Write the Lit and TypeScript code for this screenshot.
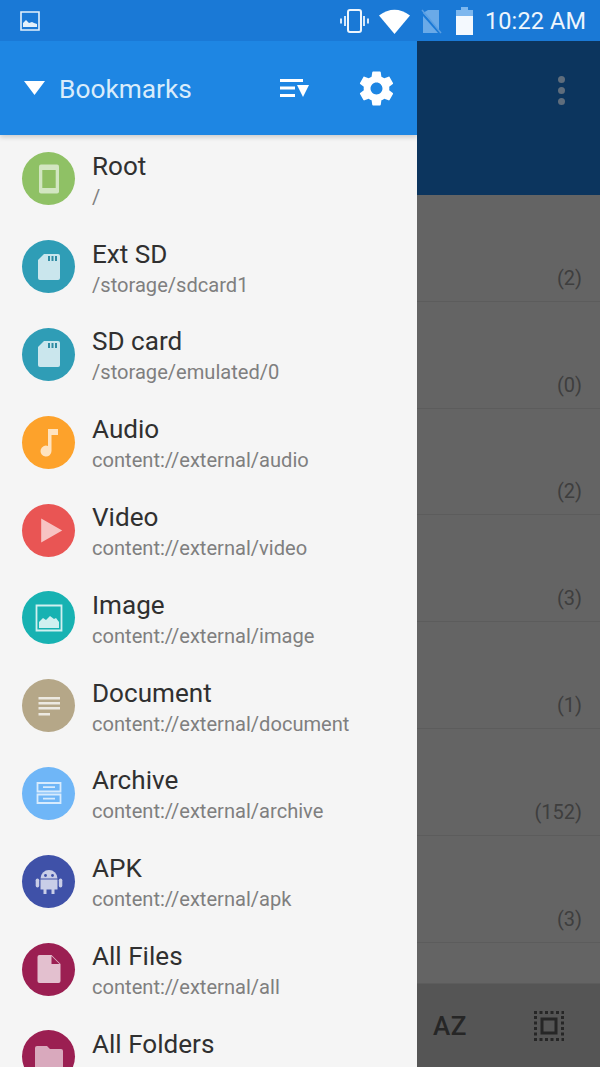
import { LitElement, html, css, svg } from "lit";
import { customElement } from "lit/decorators.js";

const sd = svg`<path d="M13 5h14a2 2 0 0 1 2 2v22a2 2 0 0 1-2 2H9a2 2 0 0 1-2-2V11z" fill="#fff" fill-opacity=".75"/><path d="M17 7h2v5h-2zM20.500 7h2v5h-2zM24 7h2v5h-2z" fill="#2f8ba3"/>`;
const icons: Record<string, unknown> = {
  root: svg`<rect x="8" y="3.500" width="20" height="29" rx="2" fill="#fff" fill-opacity=".6"/><rect x="11.300" y="9" width="13.400" height="18" fill="#8fbf62"/>`,
  sd,
  audio: svg`<path d="M17 5h10v6h-6.500v16a5.500 5.500 0 1 1-3.500-5.100z" fill="#fff" fill-opacity=".7"/>`,
  video: svg`<path d="M10.200 6.500 31.200 18.500 10.200 30.500z" fill="#fff" fill-opacity=".65"/>`,
  image: svg`<path d="M5.500 5.500h25v25h-25z" fill="none" stroke="#fff" stroke-opacity=".8" stroke-width="1.800"/><path d="M8 28v-6l4-4 3 2 4-4 4 3 2-1 3 4v6z" fill="#fff" fill-opacity=".8"/>`,
  doc: svg`<path d="M7.500 9h21.500v2.500H7.500zM7.500 14h21.500v2.500H7.500zM7.500 19h21.500v2.500H7.500zM7.500 25h11.500v2.500H7.500z" fill="#fff" fill-opacity=".75"/>`,
  archive: svg`<g fill="none" stroke="#fff" stroke-opacity=".72" stroke-width="1.800"><path d="M6.500 8h23v8.500h-23zM6.500 19.500h23v8.500h-23z"/><path d="M12 12.200h12M12 23.700h12"/></g>`,
  apk: svg`<g fill="#fff" fill-opacity=".72"><path d="M9.500 15.500a8.500 8.500 0 0 1 17 0z"/><path d="M9.500 16.500h17v10h-3v4.500h-3v-4.500h-5v4.500h-3v-4.500h-3z"/><rect x="4.700" y="15.500" width="3.500" height="9" rx="1.700"/><rect x="27.800" y="15.500" width="3.500" height="9" rx="1.700"/></g><circle cx="14.500" cy="12.500" r="1.400" fill="#3f51a8"/><circle cx="21.500" cy="12.500" r="1.400" fill="#3f51a8"/>`,
  file: svg`<path d="M8.500 4h12l9 9v17a2 2 0 0 1-2 2h-19a2 2 0 0 1-2-2V6a2 2 0 0 1 2-2z" fill="#fff" fill-opacity=".72"/><path d="M20.500 5v8h8z" fill="#9b1f52"/>`,
  folder: svg`<path d="M6 7h10l3 3h11a2 2 0 0 1 2 2v19a2 2 0 0 1-2 2H6a2 2 0 0 1-2-2V9a2 2 0 0 1 2-2z" fill="#fff" fill-opacity=".62"/>`,
};

const rows = [
  ["Root", "/", "#8fc165", "root"],
  ["Ext SD", "/storage/sdcard1", "#2f9db6", "sd"],
  ["SD card", "/storage/emulated/0", "#2f9db6", "sd"],
  ["Audio", "content://external/audio", "#fda22b", "audio"],
  ["Video", "content://external/video", "#e95554", "video"],
  ["Image", "content://external/image", "#17b2b2", "image"],
  ["Document", "content://external/document", "#b5a788", "doc"],
  ["Archive", "content://external/archive", "#6fb6f7", "archive"],
  ["APK", "content://external/apk", "#3f51a8", "apk"],
  ["All Files", "content://external/all", "#9b1f52", "file"],
  ["All Folders", "", "#9b1f52", "folder"],
];
const counts = ["(2)", "(0)", "(2)", "(3)", "(1)", "(152)", "(3)"];

@customElement("app-root")
export class AppRoot extends LitElement {
  static styles = css`
    :host { display: block; width: 600px; height: 1067px; overflow: hidden; position: relative; font-family: Roboto, "Liberation Sans", sans-serif; background: #646464; }
    .status { height: 41px; background: #1a79d6; display: flex; align-items: center; padding: 0 14px 0 20px; color: #fff; }
    .status-right { margin-left: auto; display: flex; align-items: center; }
    .time { font-size: 23.500px; margin-left: 12px; color: #eef6fd; letter-spacing: .1px; }
    .back { display: flex; flex-direction: column; height: 1026px; }
    .bar { height: 154px; background: #0c355e; flex: none; display: flex; justify-content: flex-end; padding: 35px 35px 0 0; box-sizing: border-box; }
    .dots { display: flex; flex-direction: column; gap: 4px; }
    .dots i { width: 7px; height: 7px; border-radius: 50%; background: #5f6d7c; }
    .list { flex: 1; background: #646464; }
    .cell { height: 106.800px; box-sizing: border-box; border-bottom: 1px solid #5c5c5c; display: flex; align-items: flex-end; justify-content: flex-end; padding: 0 18px 11px 0; color: #3e3e3e; font-size: 20px; }
    .cell.last { height: 40px; border: 0; }
    .bottom { height: 85px; flex: none; background: #555; border-top: 1px solid #5c5c5c; display: flex; align-items: center; padding-left: 433px; box-sizing: border-box; color: #262626; }
    .az { font-size: 26px; font-weight: 500; letter-spacing: .5px; width: 100px; }
    .drawer { position: absolute; left: 0; top: 41px; bottom: 0; width: 417px; background: #f5f5f5; overflow: hidden; }
    .head { height: 94px; background: #1e86e3; display: flex; align-items: center; padding: 0 20px 0 24px; color: #d9ecfb; box-shadow: 0 2px 5px rgba(0,0,0,.18); position: relative; }
    .head h1 { margin: 2px 0 0 14px; font-size: 26.300px; font-weight: 400; flex: 1; }
    .head svg.sort { margin-right: 47px; }
    .row { height: 87.800px; display: flex; align-items: center; padding-left: 22px; box-sizing: border-box; }
    .circle { width: 53px; height: 53px; border-radius: 50%; flex: none; display: flex; align-items: center; justify-content: center; }
    .txt { margin-left: 17px; display: flex; flex-direction: column; padding-top: 3px; }
    .t { font-size: 26.100px; color: #303030; line-height: 30px; }
    .s { font-size: 20.100px; color: #7f7f7f; line-height: 26px; height: 26px; margin-top: 3px; }
  `;

  render() {
    return html`
      <div class="status">
        <svg width="20" height="20" viewBox="0 0 20 20"><path d="M1 1h18v18H1z" fill="none" stroke="#e3f1fc" stroke-width="1.600"/><path d="M3 16v-4l3-3 3 3 3-1 2 1 3 1v3z" fill="#e3f1fc"/></svg>
        <div class="status-right">
          <svg width="31" height="26" viewBox="0 0 31 26"><rect x="9" y="2" width="13" height="22" rx="2" fill="none" stroke="#eef6fd" stroke-width="2"/><path d="M5 8h2v10H5zM24 8h2v10h-2zM1 10.500h2v5H1zM28 10.500h2v5h-2z" fill="#d5e8fa"/></svg>
          <svg style="margin-left:9px" width="31" height="26" viewBox="0 0 31 26"><path d="M0 7.500Q15.500-4 31 7.500L15.500 26z" fill="#fff"/></svg>
          <svg style="margin-left:10px" width="22" height="28" viewBox="0 0 22 28"><path d="M8 3h11v20L3 6z" fill="#6aaae8"/><path d="M3 9l15 17H3z" fill="#6aaae8"/><path d="M2 3l19 23" stroke="#5b9fe2" stroke-width="1.500"/></svg>
          <svg style="margin-left:14px" width="17" height="28" viewBox="0 0 17 28"><path d="M5 0h7v3h5v7H0V3h5z" fill="#7db7ee"/><path d="M0 9h17v19H0z" fill="#f4f9fe"/></svg>
          <span class="time">10:22 AM</span>
        </div>
      </div>
      <div class="back">
        <div class="bar"><div class="dots"><i></i><i></i><i></i></div></div>
        <div class="list">
          ${counts.map((c) => html`<div class="cell">${c}</div>`)}
          <div class="cell last"></div>
        </div>
        <div class="bottom">
          <span class="az">AZ</span>
          <svg width="32" height="32" viewBox="0 0 32 32"><rect x="9" y="9" width="14" height="14" fill="none" stroke="#262626" stroke-width="3"/><path d="M1 2.500H31M1 29.500H31M2.500 6V27M29.500 6V27" fill="none" stroke="#262626" stroke-width="3" stroke-dasharray="3 2.500"/></svg>
        </div>
      </div>
      <div class="drawer">
        <div class="head">
          <svg width="21" height="14" viewBox="0 0 21 14"><path d="M0 0h21L10.500 14z" fill="#fff"/></svg>
          <h1>Bookmarks</h1>
          <svg class="sort" width="29" height="20" viewBox="0 0 29 20"><path d="M0 1h23v3H0zM0 8.500h15v3H0zM0 16h15v3H0z" fill="#fff"/><path d="M17 7h12l-6 12z" fill="#fff"/></svg>
          <svg width="41" height="41" viewBox="0 0 24 24"><path fill="#fff" d="M19.430 12.980c.04-.32.070-.64.070-.98s-.03-.66-.07-.98l2.110-1.650c.19-.15.240-.42.120-.64l-2-3.460c-.12-.22-.39-.3-.61-.22l-2.490 1c-.52-.4-1.080-.73-1.690-.98l-.38-2.650A.488.488 0 0 0 14 2h-4c-.25 0-.46.18-.49.420l-.38 2.650c-.61.25-1.170.59-1.690.98l-2.490-1c-.23-.09-.49 0-.61.220l-2 3.460c-.13.220-.07.490.12.640l2.110 1.650c-.04.320-.07.650-.07.980s.03.660.07.980l-2.110 1.650c-.19.150-.24.420-.12.640l2 3.460c.12.220.39.300.61.220l2.490-1c.52.400 1.080.730 1.690.980l.38 2.650c.03.240.24.420.49.420h4c.25 0 .46-.18.49-.42l.38-2.650c.61-.25 1.170-.59 1.690-.98l2.490 1c.23.090.49 0 .61-.22l2-3.460c.12-.22.07-.49-.12-.64l-2.110-1.650zM12 15.500c-1.930 0-3.500-1.570-3.500-3.500s1.570-3.500 3.500-3.500 3.500 1.570 3.500 3.500-1.570 3.500-3.500 3.500z"/></svg>
        </div>
        ${rows.map(
          ([t, s, c, i]) => html`<div class="row">
            <div class="circle" style="background:${c}">
              <svg width="36" height="36" viewBox="0 0 36 36">${icons[i]}</svg>
            </div>
            <div class="txt"><span class="t">${t}</span><span class="s">${s}</span></div>
          </div>`
        )}
      </div>
    `;
  }
}
